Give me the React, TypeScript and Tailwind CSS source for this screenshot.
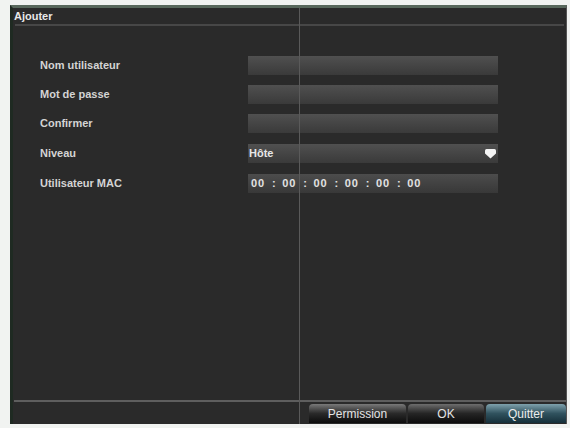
const fields = [
  { label: "Nom utilisateur", value: "" },
  { label: "Mot de passe", value: "" },
  { label: "Confirmer", value: "" },
];

const mac = ["00", "00", "00", "00", "00", "00"];

export default function App() {
  return (
    <div className="w-[570px] h-[428px] bg-[#f1f3f1] pt-[5px] pl-[10px] font-['Liberation_Sans',Arial,sans-serif]">
      <div className="relative w-[557px] h-[419px] bg-[#2a2a2a] border-t-[3px] border-t-[#58685c] border-l-[3px] border-l-[#1f2a22] border-r border-r-[#555] flex flex-col">
        {/* title */}
        <div className="h-[16px] pl-[1px] pt-[1px] text-[11px] font-bold text-[#e8e8e8] leading-[14px]">Ajouter</div>
        <div className="mx-[2px] h-[2px] bg-[#474747]" />

        {/* form */}
        <div className="flex flex-col gap-[10px] pt-[30px] pl-[27px]">
          {fields.map(f => (
            <div key={f.label} className="flex items-center h-[19px]">
              <span className="w-[208px] text-[11px] font-bold text-[#d4d4d4]">{f.label}</span>
              <div className="w-[250px] h-[19px] bg-gradient-to-b from-[#505050] to-[#3a3a3a]" />
            </div>
          ))}
          <div className="flex items-center h-[19px] mt-[1px]">
            <span className="w-[208px] text-[11px] font-bold text-[#d4d4d4]">Niveau</span>
            <div className="w-[250px] h-[19px] bg-gradient-to-b from-[#505050] to-[#3a3a3a] flex items-center justify-between pl-[1px] pr-[2px]">
              <span className="text-[11px] font-bold text-[#e6e6e6]">Hôte</span>
              <svg width="11" height="10" viewBox="0 0 11 10">
                <path d="M0 1.5 Q0 0 1.5 0 H9.5 Q11 0 11 1.5 V4.5 L5.5 9.5 L0 4.5 Z" fill="#f4f4f4" />
              </svg>
            </div>
          </div>
          <div className="flex items-center h-[19px] mt-[1px]">
            <span className="w-[208px] text-[11px] font-bold text-[#d4d4d4]">Utilisateur MAC</span>
            <div className="w-[250px] h-[19px] bg-gradient-to-b from-[#4c4c4c] to-[#383838] flex items-center pl-[3px] text-[11px] font-bold text-[#e2e2e2]">
              {mac.map((m, i) => (
                <span key={i} className="flex items-center">
                  <span className="tracking-[1px]">{m}</span>
                  {i < mac.length - 1 && <span className="w-[17px] text-center">:</span>}
                </span>
              ))}
            </div>
          </div>
        </div>

        <div className="flex-1" />

        {/* footer */}
        <div className="ml-[1px] h-[2px] bg-[#5e5e5e]" />
        <div className="flex justify-end gap-[2px] pt-[2px] pb-[1px] h-[22px]">
          <button className="w-[97px] h-[19px] rounded-t-[4px] bg-gradient-to-b from-[#7a7a7a] via-[#2a2a2a] to-[#0c0c0c] text-[12px] text-[#e4e4e4]">Permission</button>
          <button className="w-[76px] h-[19px] rounded-t-[4px] bg-gradient-to-b from-[#6e6e6e] via-[#252525] to-[#0c0c0c] text-[12px] text-[#e4e4e4]">OK</button>
          <button className="w-[80px] h-[19px] rounded-t-[4px] bg-gradient-to-b from-[#7fa2ad] via-[#30525e] to-[#16303a] text-[12px] text-[#ececec]">Quitter</button>
        </div>

        {/* vertical guide line */}
        <div className="absolute left-[286px] top-0 bottom-0 w-px bg-[#5a5a5a]" />
      </div>
    </div>
  );
}
